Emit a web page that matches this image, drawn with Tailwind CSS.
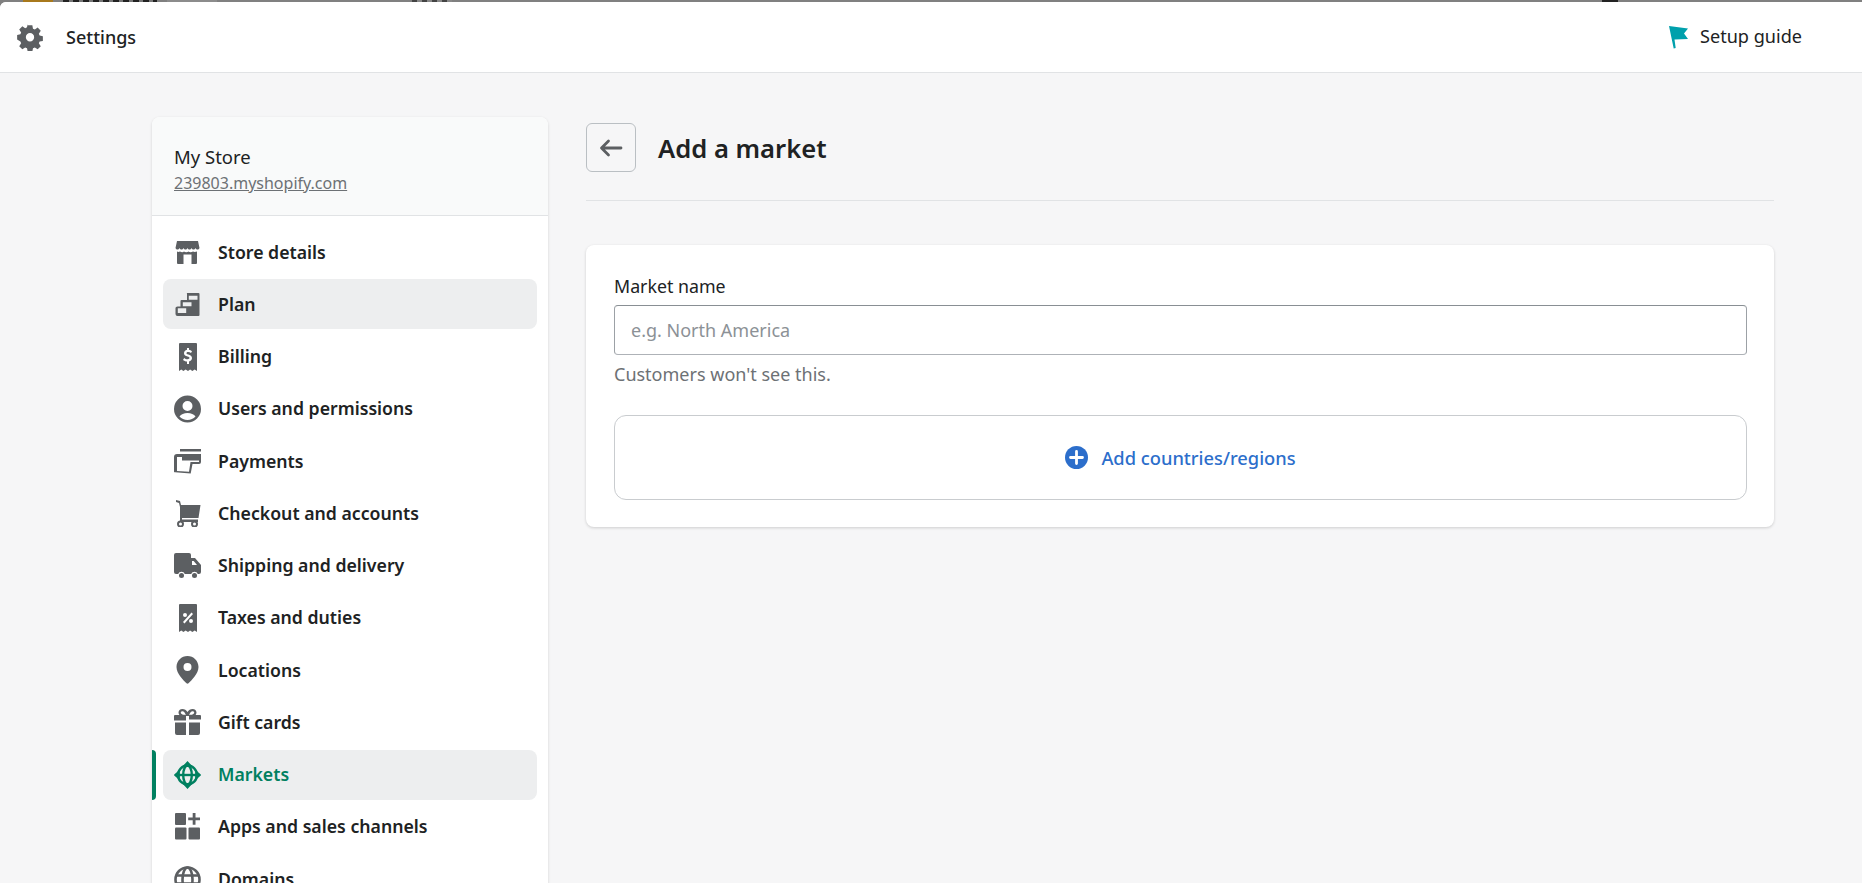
<!doctype html>
<html>
<head>
<meta charset="utf-8">
<script src="https://cdn.jsdelivr.net/npm/@tailwindcss/browser@4"></script>
<title>Add a market</title>
</head>
<body class="h-[883px] overflow-hidden bg-[#808080] font-['Noto_Sans','Open_Sans',sans-serif] text-[#202223]">
<div class="flex h-[2px]">
  <span class="ml-[23px] w-[30px] bg-[#a8791c]"></span>
  <span class="ml-[10px] w-[94px] bg-[repeating-linear-gradient(90deg,#222_0_6px,#777_6px_10px)]"></span>
  <span class="ml-[10px] w-[50px] bg-[#8c8c8c]"></span>
  <span class="ml-[195px] w-[40px] bg-[repeating-linear-gradient(90deg,#444_0_5px,#888_5px_10px)]"></span>
  <span class="ml-[1150px] w-[16px] bg-[#222]"></span>
</div>
<div class="h-[881px] overflow-hidden rounded-tl-md bg-[#f6f6f7]">
  <header class="flex h-[71px] items-center justify-between border-b border-[#e1e3e5] bg-white pl-[17px] pr-[60px]">
    <div class="flex items-center gap-[23px]">
      <svg class="h-[27px] w-[26px]" viewBox="0 0 20 20" fill="#5c5f62"><path fill-rule="evenodd" d="M8.2 0.6h3.6l.5 2.6 1.4.6 2.2-1.500 2.400 2.600-1.500 2.200.6 1.400 2.500.5v3.600l-2.500.5-.6 1.400 1.500 2.200-2.400 2.400-2.200-1.500-1.400.6-.5 2.600H8.200l-.5-2.600-1.400-.6-2.200 1.500-2.400-2.400 1.500-2.200-.6-1.400L.1 11.600V8l2.500-.5.6-1.400-1.500-2.200 2.400-2.600 2.200 1.500 1.400-.6.5-2.600zM10 13a3.200 3.200 0 1 0 0-6.400a3.200 3.200 0 0 0 0 6.400z"/></svg>
      <span class="text-[18px] font-medium">Settings</span>
    </div>
    <div class="flex items-center gap-[11px]">
      <svg class="h-[24px] w-[20px]" viewBox="0 0 20 24" fill="#00a0ac"><path d="M0 1l19 2.500-4 5 4 5.500-13.500.5L6.700 23l-2 .5z"/></svg>
      <span class="text-[18.100px]">Setup guide</span>
    </div>
  </header>

  <div class="flex items-start gap-[38px] pl-[152px] pr-[88px] pt-[44px]">
    <aside class="w-[396px] shrink-0 rounded-t-lg bg-white shadow-[0_1px_3px_rgba(23,24,24,0.16)]">
      <div class="h-[99px] rounded-t-lg border-b border-[#e1e3e5] bg-[#f9fafa] px-[22px] pt-[27px]">
        <div class="text-[18.500px] leading-[26px]">My Store</div>
        <a class="block text-[16px] leading-[26px] text-[#6d7175] underline">239803.myshopify.com</a>
      </div>
      <nav class="flex flex-col gap-[2.250px] px-[11px] pt-[11px] pb-4 text-[17.700px] font-semibold">
        <a class="flex h-[50px] items-center gap-[17px] rounded-lg pl-[11px]">
          <svg class="h-[27px] w-[27px] shrink-0" viewBox="-1.500 -2 27 27" fill="#5c5f62"><path d="M1.500 0h21L24 7c-1 2-3 2-4 0-1 2-3 2-4 0-1 2-3 2-4 0-1 2-3 2-4 0-1 2-3 2-4 0-1 2-3 2-4 0z"/><path d="M1.500 10.500c1 .5 2 .5 3 0 1.500 1 3 1 4 0 1 1 3.500 1 4.500 0 1 1 3 1 4.500 0 1 .5 2.500.5 4 0V22a1 1 0 0 1-1 1H16V13.500H8V23H2.500a1 1 0 0 1-1-1z"/></svg>
          <span>Store details</span>
        </a>
        <a class="flex h-[50px] items-center gap-[17px] rounded-lg bg-[#edeeef] pl-[11px]">
          <svg class="h-[27px] w-[27px] shrink-0" viewBox="-1.500 -2 27 27" fill="#5c5f62"><path fill-rule="evenodd" d="M11.500 0H23a1 1 0 0 1 1 1V22a1 1 0 0 1-1 1H2q-2 0-2-2V15q0-1.500 2-1.500H5V8a1 1 0 0 1 1-1h5.500V1a1 1 0 0 1 0-1zM13.300 2.700v4h8.700v-4zM7.300 9.300v4H16v-4zM2.300 15.300v4.700h8.400v-4.700z"/></svg>
          <span>Plan</span>
        </a>
        <a class="flex h-[50px] items-center gap-[17px] rounded-lg pl-[11px]">
          <svg class="h-[28px] w-[27px] shrink-0" viewBox="0 0 27 28" fill="#5c5f62"><path fill-rule="evenodd" d="M5 1a1 1 0 0 1 1-1h16a1 1 0 0 1 1 1v27l-2.300-1.500-2.300 1.500-2.300-1.500-2.100 1.500-2.300-1.500-2.300 1.500L7.300 26.500 5 28zM13 5v1.800c-1.800.4-3 1.600-3 3.400 0 2 1.600 2.800 3.500 3.300 1.500.4 2 .8 2 1.500s-.8 1.200-2 1.200c-1.300 0-2.500-.5-3.300-1.300L9 17c.9.800 2.500 1.500 4 1.600V21h2v-2.400c1.700-.4 3-1.600 3-3.500 0-2.100-1.700-3-3.600-3.500-1.400-.4-1.900-.7-1.900-1.400 0-.6.600-1.100 1.700-1.100s2 .4 2.800 1l1-1.900c-.9-.7-1.900-1.200-3-1.400V5z"/></svg>
          <span>Billing</span>
        </a>
        <a class="flex h-[50px] items-center gap-[17px] rounded-lg pl-[11px]">
          <svg class="h-[28px] w-[27px] shrink-0" viewBox="0 0 27 28" fill="#5c5f62"><path fill-rule="evenodd" d="M13.500 0.500a13.500 13.500 0 1 0 0 27 13.500 13.500 0 0 0 0-27zM13.500 6a5 5 0 1 1 0 10 5 5 0 0 1 0-10zM5.500 21.500c1.500-2.300 4.500-3.500 8-3.500s6.500 1.200 8 3.500c-2 2.200-4.800 3.500-8 3.500s-6-1.300-8-3.500z"/></svg>
          <span>Users and permissions</span>
        </a>
        <a class="flex h-[50px] items-center gap-[17px] rounded-lg pl-[11px]">
          <svg class="h-[27px] w-[27px] shrink-0" viewBox="0 0 27 27" fill="#5c5f62"><path d="M6 1h21v2.500H6z"/><path fill-rule="evenodd" d="M3 6h24v8a2 2 0 0 1-2 2h-6.500l-1.800 9.500-15.700-1.300A1 1 0 0 1 0 23V9a3 3 0 0 1 3-3zM3 23l12 .8 1.500-9.800H25v-1.500H8V9H3z"/></svg>
          <span>Payments</span>
        </a>
        <a class="flex h-[50px] items-center gap-[17px] rounded-lg pl-[11px]">
          <svg class="h-[27px] w-[27px] shrink-0" viewBox="0 0 27 27" fill="#5c5f62"><path d="M2 0l4 1 1 4h19.500l-2 13H8v1.500h16v2.500H6V7L5 3 2 2z"/><circle cx="6.500" cy="24" r="2.500" fill="none" stroke="#5c5f62" stroke-width="2"/><circle cx="20.500" cy="24" r="2.500" fill="none" stroke="#5c5f62" stroke-width="2"/></svg>
          <span>Checkout and accounts</span>
        </a>
        <a class="flex h-[50px] items-center gap-[17px] rounded-lg pl-[11px]">
          <svg class="h-[27px] w-[27px] shrink-0" viewBox="0 0 27 27" fill="#5c5f62"><path fill-rule="evenodd" d="M2 1h13a2 2 0 0 1 2 2v3h4l6 7v7a2 2 0 0 1-2 2h-1.200a3.500 3.500 0 0 0-6.600 0H10.800a3.500 3.500 0 0 0-6.600 0H2a2 2 0 0 1-2-2V3a2 2 0 0 1 2-2zM18 9v4h5l-3.300-4z"/><circle cx="7.500" cy="23.500" r="2.500"/><circle cx="20.500" cy="23.500" r="2.500"/></svg>
          <span>Shipping and delivery</span>
        </a>
        <a class="flex h-[50px] items-center gap-[17px] rounded-lg pl-[11px]">
          <svg class="h-[28px] w-[27px] shrink-0" viewBox="0 0 27 28" fill="#5c5f62"><path fill-rule="evenodd" d="M5 1a1 1 0 0 1 1-1h16a1 1 0 0 1 1 1v27l-2.300-1.500-2.300 1.500-2.300-1.500-2.100 1.500-2.300-1.500-2.300 1.500L7.300 26.500 5 28zM11 9a2 2 0 1 0 0 4 2 2 0 0 0 0-4zM17 15a2 2 0 1 0 0 4 2 2 0 0 0 0-4zM17.500 8.500L9 18l1.500 1.500L19 10z"/></svg>
          <span>Taxes and duties</span>
        </a>
        <a class="flex h-[50px] items-center gap-[17px] rounded-lg pl-[11px]">
          <svg class="h-[28px] w-[27px] shrink-0" viewBox="0 0 27 28" fill="#5c5f62"><path fill-rule="evenodd" d="M13.500 0C7.500 0 2.500 4.800 2.500 11c0 6.500 7 13.500 10 16.200a1.500 1.500 0 0 0 2 0c3-2.700 10-9.700 10-16.200C24.500 4.800 19.500 0 13.500 0zM13.500 7a4 4 0 1 1 0 8 4 4 0 0 1 0-8z"/></svg>
          <span>Locations</span>
        </a>
        <a class="flex h-[50px] items-center gap-[17px] rounded-lg pl-[11px]">
          <svg class="h-[27px] w-[27px] shrink-0" viewBox="0 0 27 27" fill="#5c5f62"><path fill-rule="evenodd" d="M8.500 0c2 0 3.800 1 5 3 1.200-2 3-3 5-3 2.500 0 4 1.700 4 3.500 0 1-.3 1.800-.9 2.500H26a1 1 0 0 1 1 1v3.500H15V7h-3v4.500H0V7a1 1 0 0 1 1-1h4.400c-.6-.7-.9-1.500-.9-2.500C4.500 1.700 6 0 8.500 0zM8.500 2.200c-1 0-1.700.6-1.700 1.400 0 1 1 2.400 5 2.400-.7-2.400-2-3.800-3.300-3.800zM18.500 2.200c-1.300 0-2.600 1.400-3.300 3.800 4 0 5-1.400 5-2.400 0-.8-.7-1.400-1.700-1.400z"/><path d="M1 13.500h11V26H3a2 2 0 0 1-2-2zM15 13.500h11V24a2 2 0 0 1-2 2h-9z"/></svg>
          <span>Gift cards</span>
        </a>
        <a class="relative flex h-[50px] items-center gap-[17px] rounded-lg bg-[#edeeef] pl-[11px] text-[#008060]">
          <span class="absolute -left-[11px] top-0 h-full w-[4px] rounded-r bg-[#008060]"></span>
          <svg class="h-[28px] w-[27px] shrink-0" viewBox="0 0 27 28" fill="none" stroke="#008060" stroke-width="2.400"><path fill="#008060" stroke="none" d="M13.500 0l5.500 6h-11zM13.500 28l5.500-6h-11zM-.2 14l6-5.500v11zM27.200 14l-6-5.500v11z"/><circle cx="13.500" cy="14" r="9.500"/><ellipse cx="13.500" cy="14" rx="4.300" ry="9.500"/><path d="M4 14h19"/></svg>
          <span>Markets</span>
        </a>
        <a class="flex h-[50px] items-center gap-[17px] rounded-lg pl-[11px]">
          <svg class="h-[27px] w-[27px] shrink-0" viewBox="0 0 27 27" fill="#5c5f62"><rect x="1" y="0" width="11" height="12" rx="1"/><rect x="1" y="14.500" width="11.500" height="12" rx="1"/><rect x="14.500" y="14.500" width="11.500" height="12" rx="1"/><path d="M18.700 0h2.800v4.500h4.500v2.800h-4.500v4.500h-2.800V7.300h-4.500V4.500h4.500z"/></svg>
          <span>Apps and sales channels</span>
        </a>
        <a class="flex h-[50px] items-center gap-[17px] rounded-lg pl-[11px]">
          <svg class="h-[27px] w-[27px] shrink-0" viewBox="0 0 27 27" fill="none" stroke="#5c5f62" stroke-width="2.600"><circle cx="13.500" cy="13.500" r="12"/><ellipse cx="13.500" cy="13.500" rx="5" ry="12"/><path d="M2 9.500h23M2 17.500h23"/></svg>
          <span>Domains</span>
        </a>
      </nav>
    </aside>

    <main class="min-w-0 flex-1">
      <div class="flex h-[84px] items-start gap-[22px] border-b border-[#e1e3e5] pt-[6px]">
        <button class="flex h-[49px] w-[50px] items-center justify-center rounded-md border border-[#babfc3] bg-[#f6f6f7]">
          <svg class="h-[18px] w-[24px]" viewBox="0 0 24 18" fill="none" stroke="#5c5f62" stroke-width="2.800" stroke-linecap="round" stroke-linejoin="round"><path d="M22 9H3M9.500 2 2.500 9l7 7"/></svg>
        </button>
        <h1 class="text-[25.600px] font-semibold leading-[51px]">Add a market</h1>
      </div>
      <section class="mt-[44px] h-[282px] rounded-lg bg-white pl-[28px] pr-[27px] pt-[29px] shadow-[0_1px_3px_rgba(23,24,24,0.18)]">
        <label class="block text-[17.800px] leading-[24px]">Market name</label>
        <div class="mt-[7px] flex h-[50px] items-center rounded border border-t-[#898f94] border-x-[#9ca1a6] border-b-[#aeb2b7] pl-[16px] text-[18px] text-[#8c9196]">e.g. North America</div>
        <p class="mt-[7px] text-[18px] leading-[24px] text-[#6d7175]">Customers won't see this.</p>
        <div class="mt-[29px] flex h-[85px] items-center justify-center gap-[13px] rounded-xl border border-[#c9cccf] text-[18.300px] font-medium text-[#2c6ecb]">
          <svg class="h-[23px] w-[23px]" viewBox="0 0 23 23"><circle cx="11.500" cy="11.500" r="11.500" fill="#2c6ecb"/><path d="M11.500 5.500v12M5.500 11.500h12" stroke="#fff" stroke-width="2.800" stroke-linecap="round"/></svg>
          <span>Add countries/regions</span>
        </div>
      </section>
    </main>
  </div>
</div>
</body>
</html>
